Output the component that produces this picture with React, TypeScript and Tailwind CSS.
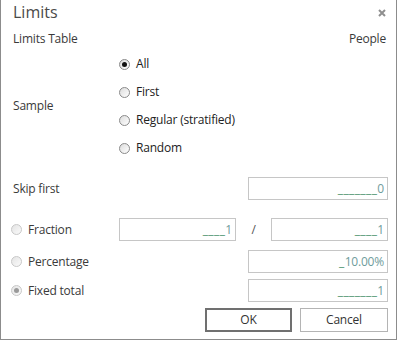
import React from "react";

type RadioProps = {
  checked?: boolean;
  disabled?: boolean;
};

function Radio({ checked, disabled }: RadioProps) {
  return (
    <span
      className={
        "w-[11px] h-[11px] rounded-full border flex items-center justify-center shrink-0 " +
        (disabled
          ? "border-[#c8c8c8] bg-gradient-to-br from-[#e4e4e4] to-[#fafafa]"
          : "border-[#8a8a8a] bg-gradient-to-br from-[#dcdcdc] to-[#ffffff]")
      }
    >
      {checked && (
        <span
          className={
            "w-[5px] h-[5px] rounded-full " + (disabled ? "bg-[#9a9a9a]" : "bg-[#111]")
          }
        />
      )}
    </span>
  );
}

function Field({ blanks, value, className }: { blanks: string; value: string; className: string }) {
  return (
    <div
      className={
        "h-[23px] border border-[#c6c6c6] bg-white flex items-center justify-end pr-[3px] text-[12px] " +
        className
      }
    >
      <span className="text-[#4f9470] tracking-[0.4px]">{blanks}</span>
      <span className="text-[#6f9c9c]">{value}</span>
    </div>
  );
}

const options = ["All", "First", "Regular (stratified)", "Random"];

export default function App() {
  return (
    <div
      className="w-[397px] h-[341px] bg-white text-[#3a3a3a] text-[12px] leading-none tracking-[-0.2px]"
      style={{ fontFamily: '"Segoe UI", "Open Sans", "Noto Sans", sans-serif' }}
    >
      <div className="h-[340px] border-x border-b border-[#8c8c8c] flex flex-col">
        {/* header */}
        <div className="h-[24px] flex items-center justify-between pl-3 pr-[10px]">
          <span className="text-[16px] text-[#4a4a4a] tracking-normal">Limits</span>
          <svg width="8" height="8" viewBox="0 0 8 8" className="mt-[2px]">
            <path d="M1 1L7 7M7 1L1 7" stroke="#8f8f8f" strokeWidth="2" />
          </svg>
        </div>

        <div className="h-[26px] flex items-center justify-between pl-3 pr-[10px] pt-[4px]">
          <span>Limits Table</span>
          <span>People</span>
        </div>

        {/* sample */}
        <div className="flex items-center">
          <div className="w-[118px] pl-3">Sample</div>
          <div className="flex flex-col">
            {options.map((o, i) => (
              <div key={o} className="h-[28px] flex items-center gap-[6px]">
                <Radio checked={i === 0} />
                <span className="text-[#222]">{o}</span>
              </div>
            ))}
          </div>
        </div>

        {/* skip first */}
        <div className="mt-[15px] h-[23px] flex items-center justify-between pl-3 pr-2">
          <span>Skip first</span>
          <Field blanks="_______" value="0" className="w-[140px]" />
        </div>

        {/* fraction */}
        <div className="mt-[18px] h-[23px] flex items-center pl-[10px] pr-2">
          <div className="w-[108px] flex items-center gap-[6px]">
            <Radio disabled />
            <span>Fraction</span>
          </div>
          <Field blanks="____" value="1" className="w-[117px]" />
          <span className="w-[35px] text-center text-[#555]">/</span>
          <Field blanks="____" value="1" className="w-[117px]" />
        </div>

        {/* percentage */}
        <div className="mt-[9px] h-[23px] flex items-center justify-between pl-[10px] pr-2">
          <div className="flex items-center gap-[6px]">
            <Radio disabled />
            <span>Percentage</span>
          </div>
          <Field blanks="_" value="10.00%" className="w-[140px]" />
        </div>

        {/* fixed total */}
        <div className="mt-[6px] h-[23px] flex items-center justify-between pl-[10px] pr-2">
          <div className="flex items-center gap-[6px]">
            <Radio checked disabled />
            <span>Fixed total</span>
          </div>
          <Field blanks="_______" value="1" className="w-[140px]" />
        </div>

        {/* buttons */}
        <div className="mt-[6px] flex justify-end gap-2 pr-2">
          <button className="w-[87px] h-[24px] border-2 border-[#707070] bg-white text-[#333] text-[12px]">
            OK
          </button>
          <button className="w-[88px] h-[24px] border border-[#b4b4b4] bg-white text-[#333] text-[12px]">
            Cancel
          </button>
        </div>
      </div>
    </div>
  );
}
